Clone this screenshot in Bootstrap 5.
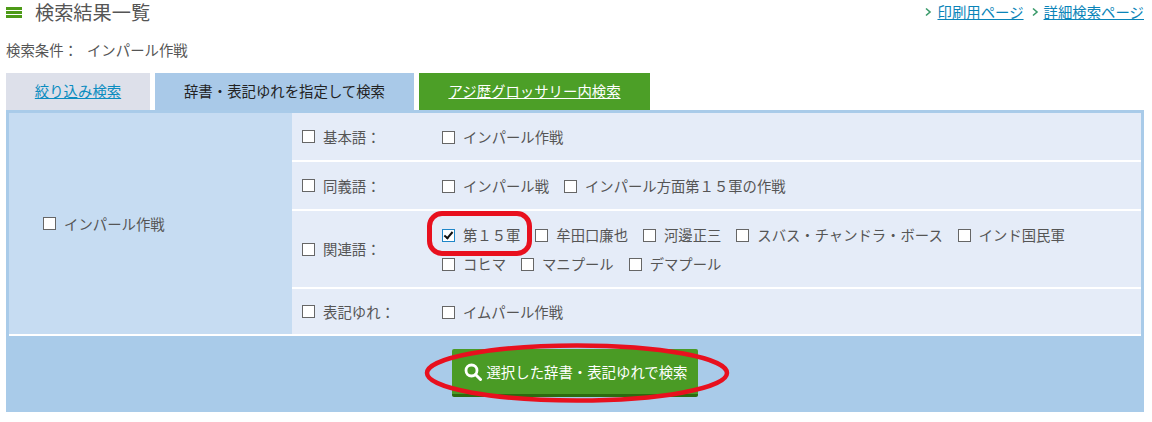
<!DOCTYPE html>
<html lang="ja">
<head>
<meta charset="utf-8">
<title>検索結果一覧</title>
<link rel="stylesheet" href="https://cdn.jsdelivr.net/npm/bootstrap@5.3.0/dist/css/bootstrap.min.css">
<style>
html,body{background:#fff;overflow:hidden}
body{font-family:"Noto Sans CJK JP","Liberation Sans",sans-serif;font-size:14.4px;color:#555;line-height:20px}
.page-wrap{padding:0 8px 0 6px;height:422px;position:relative}
.head-line{height:24px}
.page-title{font-size:19.2px;line-height:24px;margin:0;font-weight:400;color:#555}
.burger{width:16px;height:11px;margin-right:13px;border-top:3px solid #4d9a17;border-bottom:3px solid #4d9a17;position:relative}
.burger::after{content:"";position:absolute;left:0;right:0;top:1px;height:3px;background:#4d9a17}
.top-links a{color:#0a84b8;font-size:14.4px}
.chev{width:10px;height:10px;margin:0 4px 0 0;flex:none}
.chev-next{margin-left:6px}
.cond-line{margin-top:14px;height:24px;line-height:24px;font-size:14.4px}
.cond-value{margin-left:9px}
.tabs-line{margin-top:11px;height:37px;gap:5px}
.tab-item{height:37px;line-height:36px;text-align:center;font-size:14.4px;display:block}
.tab-a{width:144px;background:#dde0ea;color:#0a8cc0}
.tab-b{width:259px;background:#a9c9e8;color:#222}
.tab-c{width:231px;background:#4c9f27;color:#fff}
.tab-a:hover{color:#0a8cc0}.tab-c:hover{color:#fff}
.panel{background:#a9cbe9;padding:3px 3px 0;height:302px}
.dict-table{height:223px;border-bottom:2px solid #fff;background:#fff}
.word-cell{width:283px;background:#c6dcf2;padding-left:34px}
.rows-col{gap:2px;background:#fff}
.rows-col>.term-row:nth-child(1){height:47px}
.rows-col>.term-row:nth-child(2){height:47px}
.rows-col>.term-row:nth-child(3){height:76px}
.rows-col>.term-row:nth-child(4){height:45px}
.term-row{background:#e5ecf8}
.term-label{width:150px;padding-left:10px;flex:none}
.terms{flex:1;padding-top:1px;display:flex;flex-wrap:wrap;row-gap:9px;width:0;font-size:14.33px}
.chk{display:inline-flex;align-items:center;line-height:20px;margin-right:15px;color:#555}
.chk input{appearance:none;-webkit-appearance:none;width:13px;height:13px;border:1px solid #666;background:#fff;margin:0 8px 0 0;flex:none;border-radius:0;position:relative}
.chk input:checked{border-color:#1f86c8}
.chk input:checked::after{content:"";position:absolute;left:3px;top:0;width:5px;height:9px;border:solid #111;border-width:0 2px 2px 0;transform:rotate(40deg)}
.foot-bar{height:76px;padding-top:13px}
.go-btn{width:246px;height:48px;background:#4a9b25;border:0;border-bottom:3px solid #2e6a10;border-radius:2px;color:#fff;font-size:14.4px;padding:0 0 0 2px}
.go-btn:hover{background:#4a9b25;color:#fff}
.mark-box{position:absolute;left:427px;top:211px;width:105px;height:45px;border:5px solid #e8101e;border-radius:15px;pointer-events:none}
.mark-oval{position:absolute;left:424px;top:343px;width:306px;height:60px;pointer-events:none}
</style>
</head>
<body>
<div class="page-wrap">
  <div class="head-line d-flex justify-content-between align-items-center">
    <div class="d-flex align-items-center"><span class="burger"></span><h1 class="page-title">検索結果一覧</h1></div>
    <div class="top-links d-flex align-items-center">
      <svg class="chev" viewBox="0 0 10 10"><path d="M3 1.5 7 5 3 8.5" fill="none" stroke="#3a9a6a" stroke-width="1.6"/></svg>
      <a href="#">印刷用ページ</a>
      <svg class="chev chev-next" viewBox="0 0 10 10"><path d="M3 1.5 7 5 3 8.5" fill="none" stroke="#3a9a6a" stroke-width="1.6"/></svg>
      <a href="#">詳細検索ページ</a>
    </div>
  </div>
  <div class="cond-line">検索条件：<span class="cond-value">インパール作戦</span></div>
  <div class="tabs-line d-flex">
    <a class="tab-item tab-a" href="#">絞り込み検索</a>
    <span class="tab-item tab-b">辞書・表記ゆれを指定して検索</span>
    <a class="tab-item tab-c" href="#">アジ歴グロッサリー内検索</a>
  </div>
  <div class="panel">
    <div class="dict-table d-flex">
      <div class="word-cell d-flex align-items-center"><label class="chk"><input type="checkbox">インパール作戦</label></div>
      <div class="rows-col flex-grow-1 d-flex flex-column">
        <div class="term-row d-flex align-items-center">
          <label class="chk term-label m-0"><input type="checkbox">基本語：</label>
          <div class="terms"><label class="chk"><input type="checkbox">インパール作戦</label></div>
        </div>
        <div class="term-row d-flex align-items-center">
          <label class="chk term-label m-0"><input type="checkbox">同義語：</label>
          <div class="terms"><label class="chk"><input type="checkbox">インパール戦</label><label class="chk"><input type="checkbox">インパール方面第１５軍の作戦</label></div>
        </div>
        <div class="term-row d-flex align-items-center">
          <label class="chk term-label m-0"><input type="checkbox">関連語：</label>
          <div class="terms">
            <label class="chk"><input type="checkbox" checked>第１５軍</label>
            <label class="chk"><input type="checkbox">牟田口廉也</label>
            <label class="chk"><input type="checkbox">河邊正三</label>
            <label class="chk"><input type="checkbox">スバス・チャンドラ・ボース</label>
            <label class="chk"><input type="checkbox">インド国民軍</label>
            <label class="chk"><input type="checkbox">コヒマ</label>
            <label class="chk"><input type="checkbox">マニプール</label>
            <label class="chk"><input type="checkbox">デマプール</label>
          </div>
        </div>
        <div class="term-row d-flex align-items-center">
          <label class="chk term-label m-0"><input type="checkbox">表記ゆれ：</label>
          <div class="terms"><label class="chk"><input type="checkbox">イムパール作戦</label></div>
        </div>
      </div>
    </div>
    <div class="foot-bar d-flex justify-content-center">
      <button type="button" class="btn go-btn d-flex align-items-center justify-content-center gap-1">
        <svg width="18" height="18" viewBox="0 0 18 18"><circle cx="7.5" cy="7.5" r="5.5" fill="none" stroke="#fff" stroke-width="2.8"/><path d="M11.5 11.5 16.5 16.5" stroke="#fff" stroke-width="3" stroke-linecap="round"/></svg>
        選択した辞書・表記ゆれで検索
      </button>
    </div>
  </div>
  <div class="mark-box"></div>
  <svg class="mark-oval" viewBox="0 0 306 60"><ellipse cx="153" cy="30" rx="150" ry="27.5" fill="none" stroke="#e8101e" stroke-width="4.5"/></svg>
</div>
</body>
</html>
